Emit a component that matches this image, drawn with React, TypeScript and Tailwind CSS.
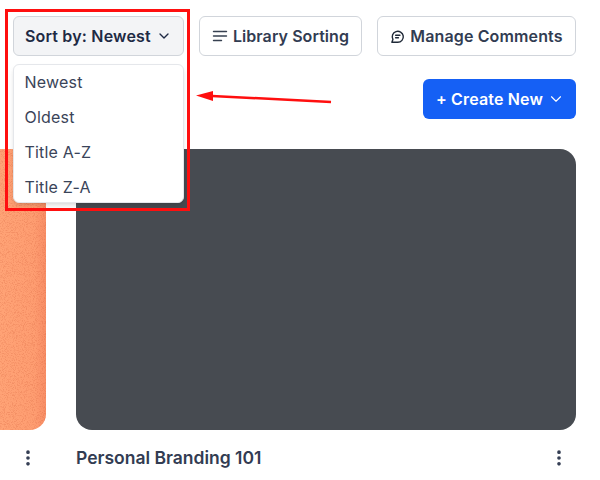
import { ChevronDown, EllipsisVertical } from "lucide-react";

const sortOptions = ["Newest", "Oldest", "Title A-Z", "Title Z-A"];

const CommentsIcon = () => (
  <svg width="15" height="15" viewBox="0 0 16 16" fill="none" stroke="#1f2937" strokeWidth="1.5" strokeLinecap="round" strokeLinejoin="round">
    <path d="M2 14.2h6.3a5.9 5.9 0 1 0-5.2-3.1L2 14.2z" />
    <path d="M6 6.6h4.6M6 9.3h3" />
  </svg>
);

const LinesIcon = () => (
  <svg width="16" height="16" viewBox="0 0 16 16" fill="none" stroke="#374151" strokeWidth="1.4" strokeLinecap="round">
    <path d="M1.5 3.5h13M1.5 8h13M1.5 12.5h8" />
  </svg>
);

const Grain = () => (
  <svg className="absolute inset-0 w-full h-full" aria-hidden="true">
    <filter id="grain" x="0" y="0" width="100%" height="100%" colorInterpolationFilters="sRGB">
      <feTurbulence type="fractalNoise" baseFrequency="1.1" numOctaves="2" />
      <feColorMatrix values="0 0 0 0 0.82 0 0 0 0 0.36 0 0 0 0 0.22 4 0 0 0 -1.9" />
    </filter>
    <rect width="100%" height="100%" filter="url(#grain)" opacity="0.25" />
  </svg>
);

export default function App() {
  return (
    <div className="relative w-[600px] h-[480px] overflow-hidden bg-white font-['Inter',sans-serif] text-[#323c52]">
      <div className="flex gap-[15px] pt-4 pl-[13px] pr-6">
        <div className="relative w-[171px]">
          <button className="w-full h-10 flex items-center gap-[5px] pl-[11px] rounded-md border border-[#d1d5db] bg-[#f3f4f6] text-[16px] font-semibold tracking-[0.18px] text-[#1e2a44]">
            Sort by: Newest
            <ChevronDown size={16} strokeWidth={2} />
          </button>
          <div className="absolute top-12 left-0 z-10 w-full h-[139px] rounded-md border border-[#e5e7eb] bg-white shadow-md">
            {sortOptions.map((option) => (
              <div key={option} className="h-[35px] flex items-center pl-[10.5px] pb-px text-[16px] tracking-[0.2px] text-[#3a4459]">
                {option}
              </div>
            ))}
          </div>
        </div>
        <button className="w-[163px] h-10 flex items-center justify-center gap-[5px] rounded-md border border-[#d1d5db] bg-white text-[16px] font-semibold tracking-[0.07px]">
          <LinesIcon />
          Library Sorting
        </button>
        <button className="w-[199px] h-10 flex items-center justify-center gap-[5px] rounded-md border border-[#d1d5db] bg-white text-[16px] font-semibold tracking-[0.13px]">
          <CommentsIcon />
          Manage Comments
        </button>
      </div>

      <div className="flex justify-end pr-6 mt-[23px]">
        <button className="w-[153px] h-10 flex items-center gap-1 pl-[13px] rounded-md bg-[#1560f5] text-[16px] font-semibold tracking-[0.15px] text-white">
          + Create New
          <ChevronDown size={18} strokeWidth={1.5} />
        </button>
      </div>

      <div className="flex gap-[30px] mt-[30px] pr-6">
        <div className="w-[46px] shrink-0">
          <div className="relative h-[281px] overflow-hidden rounded-br-2xl bg-gradient-to-r from-[#ffa376] via-[#fe9d71] via-75% to-[#f88e66]">
            <Grain />
          </div>
          <div className="flex justify-end mt-[16px] h-6 items-center pr-2">
            <EllipsisVertical size={20} strokeWidth={2.4} />
          </div>
        </div>
        <div className="flex-1">
          <div className="h-[281px] rounded-2xl bg-[#474b51]" />
          <div className="flex items-center justify-between mt-[16px] h-6">
            <span className="text-[17.5px] font-semibold">Personal Branding 101</span>
            <EllipsisVertical size={20} strokeWidth={2.4} className="mr-[7px]" />
          </div>
        </div>
      </div>

      {/* annotation drawn on top of the screenshot */}
      <div className="absolute left-[5px] top-[9px] w-[185px] h-[202px] border-[3px] border-[#ff0f0f] z-20" />
      <svg className="absolute left-0 top-0 z-20" width="600" height="480" fill="none">
        <path d="M331 102 L212 96" stroke="#ff0f0f" strokeWidth="2.5" />
        <path d="M196 95.5 L213 91 L213 101 Z" fill="#ff0f0f" />
      </svg>
    </div>
  );
}
